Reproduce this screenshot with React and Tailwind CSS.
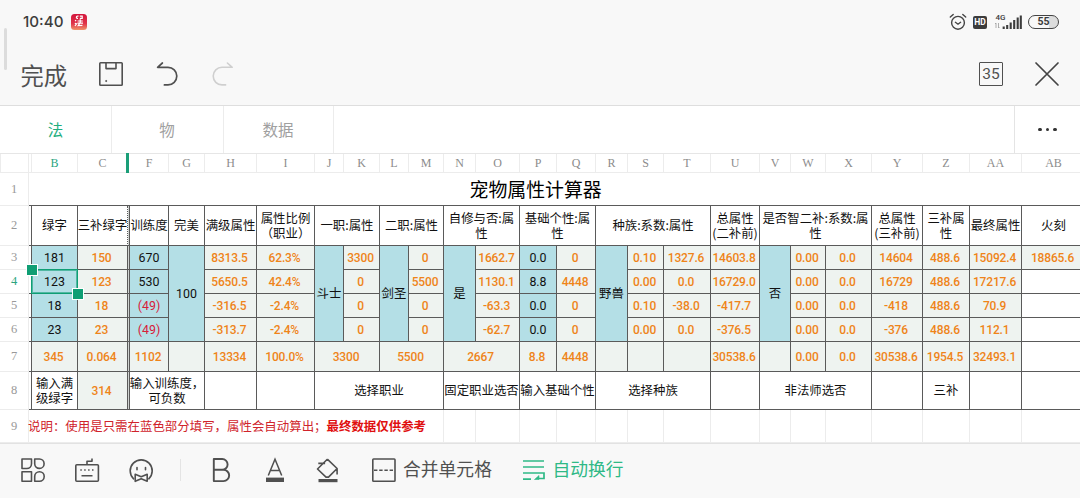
import clsx from 'clsx';

// Text cells: t = text, c = column span, r = row span, k = kind
const KIND = {
  head: 'bg-white text-[#111] border-[#5a5a5a]',
  blue: "bg-[#b4dfe6] text-[#111] border-[#5a5a5a] font-['Roboto','Noto_Sans_CJK_SC',sans-serif]",
  red: "bg-[#b4dfe6] text-[#d8203a] border-[#5a5a5a] font-['Roboto',sans-serif]",
  num: "bg-[#eef3f0] text-[#ef8419] border-[#5a5a5a] font-['Roboto',sans-serif] font-medium text-[12px] tracking-[-0.15px] pr-[2px] pt-[2px]",
  blank: 'bg-white border-[#5a5a5a]',
  light: 'bg-white border-[#ececec]',
};

const COL_SPAN = { 1: '', 2: 'col-span-2', 3: 'col-span-3', 4: 'col-span-4' };

const LETTERS = ['F', 'G', 'H', 'I', 'J', 'K', 'L', 'M', 'N', 'O', 'P', 'Q', 'R', 'S', 'T', 'U', 'V', 'W', 'X', 'Y', 'Z', 'AA', 'AB'];

const h = (t, c = 1) => ({ t, c, k: 'head' });
const n = (t, c = 1) => ({ t, c, k: 'num' });
const b = (t, r = 1) => ({ t, r, k: 'blue' });
const red = (t) => ({ t, k: 'red' });
const sliver = { k: 'blank' };
const gap = { k: 'blank', gap: true };

const ROWS = [
  { id: 2, cells: [
    sliver, h('绿字'), { ...h('三补绿字'), dotted: true }, gap, h('训练度'), h('完美'), h('满级属性'), h('属性比例\n（职业）'),
    h('一职:属性', 2), h('二职:属性', 2), h('自修与否:属\n性', 2), h('基础个性:属\n性', 2), h('种族:系数:属性', 3),
    h('总属性\n(二补前)'), h('是否智二补:系数:属\n性', 3), h('总属性\n(三补前)'), h('三补属\n性'), h('最终属性'), h('火刻'),
  ] },
  { id: 3, cells: [
    sliver, b('181'), n('150'), gap, b('670'), b('100', 4), n('8313.5'), n('62.3%'), b('斗士', 4), n('3300'),
    b('剑圣', 4), n('0'), b('是', 4), n('1662.7'), b('0.0'), n('0'), b('野兽', 4), n('0.10'), n('1327.6'),
    n('14603.8'), b('否', 4), n('0.00'), n('0.0'), n('14604'), n('488.6'), n('15092.4'), n('18865.6'),
  ] },
  { id: 4, cells: [
    sliver, { ...b('123'), selected: true }, n('123'), gap, b('530'), n('5650.5'), n('42.4%'), n('0'), n('5500'),
    n('1130.1'), b('8.8'), n('4448'), n('0.00'), n('0.0'), n('16729.0'), n('0.00'), n('0.0'), n('16729'),
    n('488.6'), n('17217.6'), h(''),
  ] },
  { id: 5, cells: [
    sliver, b('18'), n('18'), gap, red('(49)'), n('-316.5'), n('-2.4%'), n('0'), n('0'), n('-63.3'), b('0.0'),
    n('0'), n('0.10'), n('-38.0'), n('-417.7'), n('0.00'), n('0.0'), n('-418'), n('488.6'), n('70.9'), h(''),
  ] },
  { id: 6, cells: [
    sliver, b('23'), n('23'), gap, red('(49)'), n('-313.7'), n('-2.4%'), n('0'), n('0'), n('-62.7'), b('0.0'),
    n('0'), n('0.00'), n('0.0'), n('-376.5'), n('0.00'), n('0.0'), n('-376'), n('488.6'), n('112.1'), h(''),
  ] },
  { id: 7, cells: [
    sliver, n('345'), n('0.064'), gap, n('1102'), n(''), n('13334'), n('100.0%'), n('3300', 2), n('5500', 2),
    n('2667', 2), n('8.8'), n('4448'), n(''), n(''), n(''), n('30538.6'), n(''), n('0.00'), n('0.0'),
    n('30538.6'), n('1954.5'), n('32493.1'), h(''),
  ] },
  { id: 8, cells: [
    sliver, h('输入满\n级绿字'), n('314'), gap, h('输入训练度，\n可负数', 2), h(''), h(''), h('选择职业', 4),
    h('固定职业选否', 2), h('输入基础个性', 2), h('选择种族', 3), h(''), h('非法师选否', 3), h(''), h('三补'), h(''), h(''),
  ] },
];

const Handle = ({ className }) => (
  <span className={clsx('absolute z-20 h-[10px] w-[10px] bg-[#0f9e74] ring-1 ring-white', className)} />
);

const Cell = ({ t, c = 1, r = 1, k, gap: isGap, dotted, selected }) => (
  <div
    className={clsx(
      'relative flex items-center justify-center whitespace-pre border-b border-r text-center',
      KIND[k],
      COL_SPAN[c],
      r === 4 && 'row-span-4',
      dotted && '[border-right-style:dotted]',
    )}
  >
    {isGap && <span className="absolute inset-0 bg-[#cfd3d1]" />}
    {t}
    {selected && (
      <>
        <span className="absolute -inset-px z-10 border border-[#0f9e74] shadow-[inset_0_0_0_1px_rgba(15,158,116,0.6)]" />
        <Handle className="-left-[5px] -top-[5px]" />
        <Handle className="-bottom-[6px] -right-[6px]" />
      </>
    )}
  </div>
);

const RowHead = ({ id }) => (
  <div
    className={clsx(
      "flex items-center justify-center border-b border-r border-[#ececec] bg-white font-['Liberation_Serif',serif] text-[12.5px]",
      id === 4 ? 'text-[#2ba57f]' : 'text-[#999]',
    )}
  >
    {id}
  </div>
);

const ColHead = ({ children, active }) => (
  <div
    className={clsx(
      "flex items-center justify-center border-b border-r border-[#ececec] font-['Liberation_Serif',serif] text-[12px]",
      active ? 'text-[#2ba57f]' : 'text-[#8c8c8c]',
    )}
  >
    {children}
  </div>
);

const StatusBar = () => (
  <div className="flex h-[44px] items-center pl-[23px] pr-[21px] text-[#3c3c3c]">
    <span className="w-[48px] pt-px font-['Inter',sans-serif] text-[15.2px] font-medium">10:40</span>
    <svg width="16" height="16" viewBox="0 0 16 16">
      <defs>
        <linearGradient id="app" x1="0" y1="0" x2="0" y2="1">
          <stop offset="0" stopColor="#d3143c" />
          <stop offset="0.6" stopColor="#e0354a" />
          <stop offset="1" stopColor="#f0956a" />
        </linearGradient>
      </defs>
      <rect width="16" height="16" rx="3.5" fill="url(#app)" />
      <path d="M7.5 2.2C5 1.6 4.6 4.6 7 4.4M8.8 2.2h2.4v2.2H8.8M4 6.2l1.2.8M3.8 9.2l1.2.4M4 12l1.8-2.6M6.6 7h5.2M9.2 5.2v4M6.4 9.2h5.6M8.6 9.4l-1.4 2.2 4.2-.2" fill="none" stroke="#fff" strokeWidth="1.2" />
    </svg>
    <div className="ml-auto flex items-center">
      <svg width="18" height="18" viewBox="0 0 18 18" fill="none" stroke="#444" strokeWidth="1.4" strokeLinecap="round">
        <circle cx="9" cy="9.8" r="6.4" />
        <path d="M6.4 9.3 9 11.2l2.6-1.9M1.3 4 4.2 1.4M16.7 4l-2.9-2.6" />
      </svg>
      <span className="ml-[6px] flex h-[13px] w-[14px] items-center justify-center rounded-[2px] bg-[#3c3c3c] font-['Roboto',sans-serif] text-[8.5px] font-bold text-white">HD</span>
      <svg className="ml-[7px]" width="28" height="18" viewBox="0 0 28 18">
        <text x="1.5" y="7.4" fontSize="8" fontWeight="500" fontFamily="Roboto, sans-serif" fill="#3c3c3c">4G</text>
        <path d="M2 10v5M1 11l1-1M4.5 10v5M5.5 14l-1 1" stroke="#999" strokeWidth="0.8" fill="none" />
        <path d="M9.7 13.6v2.4M13.2 12v4M16.7 9.5v6.5M20.2 7V16M23.7 4.5V16M26.8 2.5V16" stroke="#3c3c3c" strokeWidth="2.1" />
      </svg>
      <span className="ml-[6px] flex h-[14px] w-[31px] items-center justify-center rounded-full border-[1.5px] border-[#444] bg-linear-to-r from-[#f8f8f8] from-70% to-[#dcdcdc] to-70% font-['Roboto',sans-serif] text-[10.5px] font-bold leading-none">55</span>
    </div>
  </div>
);

const AppBar = () => (
  <div className="flex h-[61px] items-center pb-[1px] pl-[20.5px] pr-[20px] text-[#505050]">
    <span className="w-[77.5px] pt-[3px] text-[23.3px] leading-none">完成</span>
    <svg width="26" height="26" viewBox="0 0 26 26" fill="none" stroke="#505050" strokeWidth="1.6" strokeLinejoin="round">
      <rect x="1.8" y="1.8" width="22.4" height="22.4" rx="0.8" />
      <path d="M8 2v5.6h10V2" />
      <circle cx="8.2" cy="20" r="0.6" fill="#505050" strokeWidth="1" />
    </svg>
    <svg className="ml-[32px]" width="24" height="26" viewBox="0 0 24 26" fill="none" stroke="#505050" strokeWidth="1.7" strokeLinecap="round" strokeLinejoin="round">
      <path d="M6.4 2 1.6 6.3h10.4a8.8 8.8 0 0 1 0 17.6H8.4" />
    </svg>
    <svg className="ml-[31px]" width="24" height="26" viewBox="0 0 24 26" fill="none" stroke="#cfcfcf" strokeWidth="1.6" strokeLinecap="round" strokeLinejoin="round">
      <path d="M16.4 2l4.8 4.3H11a8.8 8.8 0 0 0 0 17.6h3.6" />
    </svg>
    <span className="ml-auto flex h-[24px] w-[24px] items-center justify-center rounded-[1px] border-[1.5px] border-[#505050] pt-[2px] font-['Roboto',sans-serif] text-[15.5px] leading-none">35</span>
    <svg className="ml-[31px]" width="26" height="26" viewBox="0 0 26 26" stroke="#444" strokeWidth="1.7" strokeLinecap="round">
      <path d="M2 2l22 22M24 2 2 24" />
    </svg>
  </div>
);

const Tabs = () => (
  <div className="flex h-[48px] items-stretch border-b border-[#e6e6e6] bg-white text-[15.5px] text-[#a0a0a0]">
    <div className="flex w-[112px] items-center justify-center border-r border-[#ececec] text-[#1fae80]">法</div>
    <div className="flex w-[112px] items-center justify-center border-r border-[#ececec] pr-px">物</div>
    <div className="flex w-[110px] items-center justify-center border-r border-[#ececec] pr-px">数据</div>
    <div className="ml-auto flex w-[66px] items-center justify-center gap-[4px] border-l border-[#e4e4e4]">
      <i className="size-[3.4px] rounded-full bg-[#333]" />
      <i className="size-[3.4px] rounded-full bg-[#333]" />
      <i className="size-[3.4px] rounded-full bg-[#333]" />
    </div>
  </div>
);

const Sheet = () => (
  <div className="grid h-[289px] w-[1086px] grid-cols-[29px_3px_46px_50px_2px_39px_36px_52px_58px_29px_36px_29px_35px_32px_44px_37px_39px_32px_36px_47px_49px_31px_35px_46px_51px_47px_52px_64px] grid-rows-[19px_33px_40px_24px_24px_24px_24px_30px_38px_33px] text-[12.4px] leading-[15px]">
    {/* Column letters */}
    <div className="border-b border-r border-l border-[#ececec]" />
    <div className="border-b border-r border-[#ececec]" />
    <ColHead active>B</ColHead>
    <ColHead>C</ColHead>
    <div className="relative border-b border-[#ececec]">
      <span className="absolute -left-[2px] -top-px h-[20px] w-[2.5px] bg-[#1a9e78]" />
    </div>
    {LETTERS.map((l) => <ColHead key={l}>{l}</ColHead>)}

    {/* Title row */}
    <RowHead id={1} />
    <div className="col-span-27 flex items-center border-b border-[#5a5a5a] pb-[2px] pl-[440.5px] text-[18.9px] text-black">宠物属性计算器</div>

    {ROWS.map(({ id, cells }) => [
      <RowHead key={`r${id}`} id={id} />,
      ...cells.map((cell, i) => <Cell key={`${id}-${i}`} {...cell} />),
    ])}

    {/* Note row */}
    <RowHead id={9} />
    <div className="col-span-12 flex items-center whitespace-nowrap border-b border-r border-[#ececec] text-[12.45px] text-[#d0232b]">
      <span className="-ml-[1px]">说明：使用是只需在蓝色部分填写，属性会自动算出；<b className="font-bold text-[#e01010]">最终数据仅供参考</b></span>
    </div>
    {Array.from({ length: 15 }).map((_, i) => <Cell key={i} k="light" />)}
  </div>
);

const Toolbar = () => (
  <div className="flex h-[55px] items-center border-t border-[#e2e2e2] bg-[#f8f8f8] pb-[2px] pl-[20px] text-[17.8px] text-[#505050]">
    <svg width="26" height="26" viewBox="0 0 26 26" fill="none" stroke="#505050" strokeWidth="1.6" strokeLinejoin="round">
      <path d="M2 2h9.5v4.8A4.7 4.7 0 0 1 6.8 11.5H2zM14.7 2h4.7a4.7 4.7 0 1 1-4.7 4.8zM2 14.7h9.5v9.5H2zM14.7 24.2v-4.8a4.75 4.75 0 1 1 4.7 4.8z" />
    </svg>
    <svg className="ml-[28px]" width="26" height="26" viewBox="0 0 26 26" fill="none" stroke="#505050" strokeWidth="1.6" strokeLinejoin="round">
      <rect x="1.8" y="7.8" width="22.6" height="16.4" rx="1" />
      <path d="M13 7.5V4.2h5V1.5" />
      <path d="M6.3 13h1.5M10.2 13h1.5M14.1 13h1.5M18 13h1.5M7.5 18.8h11" />
    </svg>
    <svg className="ml-[28px]" width="26" height="26" viewBox="0 0 26 26" fill="none" stroke="#505050" strokeWidth="1.6" strokeLinejoin="round" strokeLinecap="round">
      <path d="M5.6 21.8A11 11 0 1 1 20.8 21.8" />
      <path d="M9 10.5v2.3M17.5 10.5v2.3" />
      <path d="M7.2 17.3l6 2.5 6-2.5v7l-6-2.6-6 2.6z" />
    </svg>
    <span className="ml-[26px] h-[22px] w-px bg-[#e4e4e4]" />
    <svg className="ml-[29px]" width="24" height="26" viewBox="0 0 24 26" fill="none" stroke="#505050" strokeWidth="1.9" strokeLinejoin="round">
      <path d="M3.8 2h8.4a5.3 5.3 0 0 1 0 10.8H3.8zM3.8 12.8h9.7a5.6 5.6 0 0 1 0 11.3H3.8z" />
    </svg>
    <svg className="ml-[29px]" width="24" height="26" viewBox="0 0 24 26" fill="none" stroke="#505050" strokeWidth="1.5">
      <path d="M5.3 18.5 12 2.3l6.7 16.2M7.5 13.5h9" />
      <path d="M3 22.8h18" strokeWidth="4.4" />
    </svg>
    <svg className="ml-[28px]" width="26" height="26" viewBox="0 0 26 26" fill="none" stroke="#505050" strokeWidth="1.6" strokeLinejoin="round">
      <path d="M3.3 6.4h6.8M12.3 2.2l9.8 9.3-8.6 8.6H11l-8.5-8.1 9.8-9.8M22.1 11.5v6" />
      <path d="M3.5 23.6h19" strokeWidth="3.2" />
    </svg>
    <svg className="ml-[30px]" width="26" height="26" viewBox="0 0 26 26" fill="none" stroke="#505050" strokeWidth="1.6">
      <rect x="1.8" y="2" width="22.2" height="22.2" rx="0.8" />
      <path d="M3 13.2h20" strokeDasharray="3.4 1.8" />
    </svg>
    <span className="-mt-[3px] ml-[6px] w-[90px] whitespace-nowrap">合并单元格</span>
    <svg className="ml-[29px]" width="24" height="26" viewBox="0 0 24 26" fill="none" stroke="#2fb986" strokeWidth="1.7">
      <path d="M1 4h21M1 10h21M1 16h21v5.5h-6M1 22.2h8" />
      <path d="M12.5 22.5l4.5-4v4z" fill="#2fb986" strokeWidth="0.6" />
    </svg>
    <span className="-mt-[3px] ml-[6.5px] whitespace-nowrap text-[#2fb986]">自动换行</span>
  </div>
);

const App = () => (
  <div className="relative h-[498px] w-[1080px] overflow-hidden bg-white font-['Noto_Sans_CJK_SC',sans-serif]">
    <span className="absolute left-[4px] top-[28px] h-[42px] w-[3px] rounded-full bg-[#dcdcdc]" />
    <header className="h-[106px] border-b border-[#dedede] bg-[#f8f8f8]">
      <StatusBar />
      <AppBar />
    </header>
    <Tabs />
    <Sheet />
    <Toolbar />
  </div>
);

export default App;
